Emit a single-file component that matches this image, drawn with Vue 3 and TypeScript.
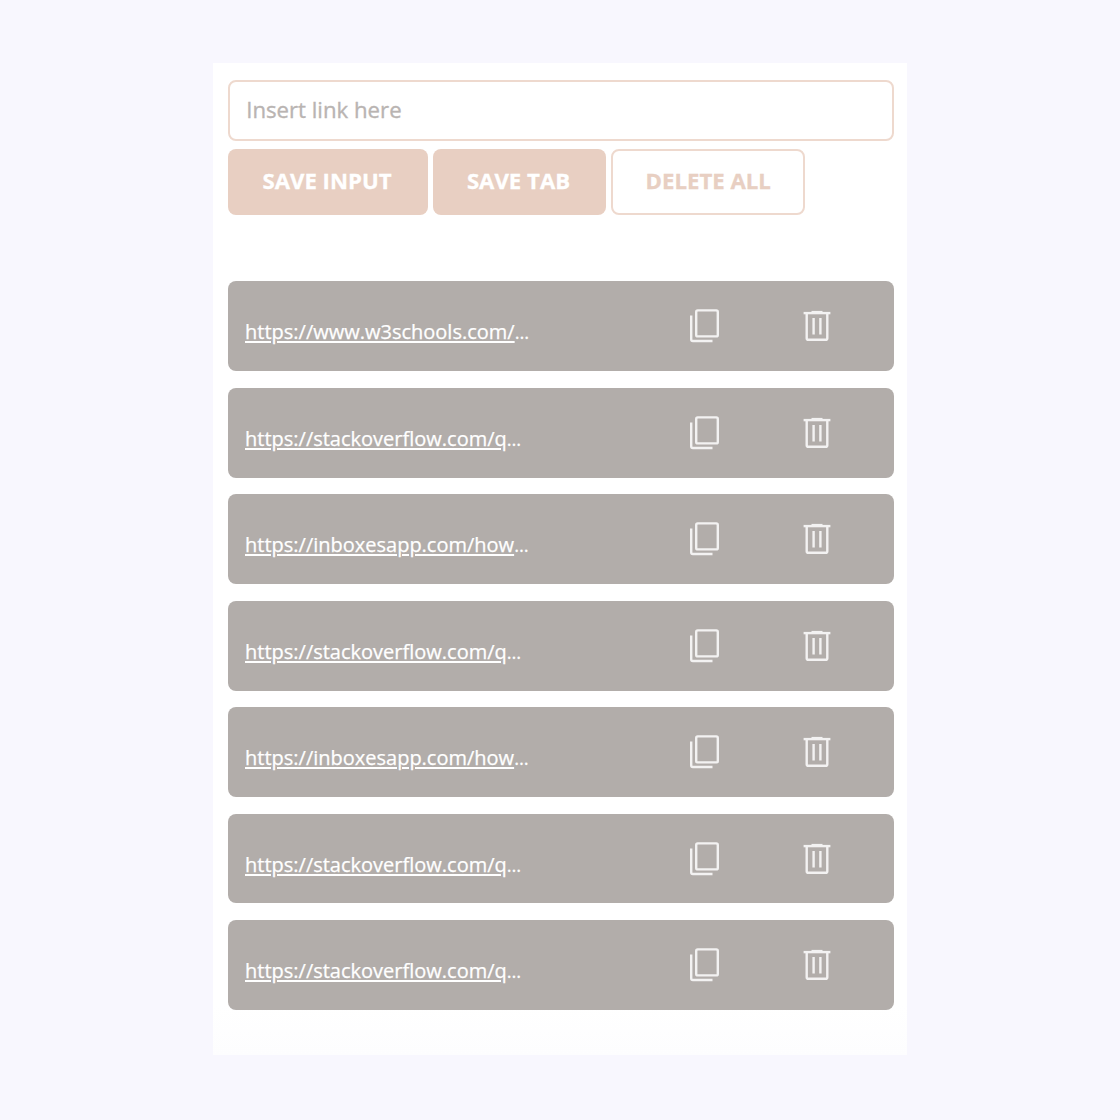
<script setup lang="ts">
import { ref } from 'vue'

const draft = ref<string>('')
const links = ref<string[]>([
  'https://www.w3schools.com/',
  'https://stackoverflow.com/q',
  'https://inboxesapp.com/how',
  'https://stackoverflow.com/q',
  'https://inboxesapp.com/how',
  'https://stackoverflow.com/q',
  'https://stackoverflow.com/q',
])
</script>

<template>
  <main class="stage">
    <section class="panel">
      <input v-model="draft" class="field" type="text" placeholder="Insert link here" />
      <div class="actions">
        <button class="btn save-input">SAVE INPUT</button>
        <button class="btn save-tab">SAVE TAB</button>
        <button class="btn outline">DELETE ALL</button>
      </div>
      <ul class="list">
        <li v-for="(link, i) in links" :key="i" class="row">
          <div class="label"><a class="link">{{ link }}</a><span class="more">…</span></div>
          <svg class="icon copy" viewBox="0 0 32 36" fill="none" stroke="currentColor" stroke-width="2.4">
            <rect x="7.2" y="2.4" width="21.6" height="26" rx="1.5" />
            <path d="M2.2 7.4V31.3Q2.2 33 3.9 33H23.5" />
          </svg>
          <svg class="icon trash" viewBox="0 0 28 36" fill="none" stroke="currentColor" stroke-width="2.4">
            <path d="M.6 5.1H27.4" />
            <path d="M8.5 4.1H19.5" />
            <path d="M3.7 5V30.2Q3.7 31.8 5.3 31.8H22.7Q24.3 31.8 24.3 30.2V5" />
            <path d="M10.6 10V26.5M17.4 10V26.5" />
          </svg>
        </li>
      </ul>
    </section>
  </main>
</template>

<style>
body {
  margin: 0;
  background: #f8f7fe;
}
</style>

<style scoped>
.stage {
  box-sizing: border-box;
  height: 1120px;
  padding: 63.4px 213px 0;
  background: #f8f7fe;
  font-family: "Open Sans", "Noto Sans", sans-serif;
}
.panel {
  box-sizing: border-box;
  width: 694px;
  height: 992px;
  padding: 16.4px 13px 0 15px;
  background: linear-gradient(#fff 95%, #fdfdfe);
}
.field {
  display: block;
  box-sizing: border-box;
  width: 666px;
  height: 61.4px;
  margin: 0;
  padding: 0 16.2px 2px;
  border: 2px solid #eed9ce;
  border-radius: 8px;
  outline: none;
  background: #fff;
  font: 22.2px "Open Sans", "Noto Sans", sans-serif;
  color: #b1acaa;
}
.field::placeholder {
  color: #b9b4b2;
  -webkit-text-stroke: 0.35px #b9b4b2;
  opacity: 1;
}
.actions {
  display: flex;
  gap: 5px;
  margin-top: 7.4px;
}
.btn {
  box-sizing: border-box;
  height: 66px;
  padding: 0 2px 1.5px 0;
  border: 0;
  border-radius: 8px;
  background: #e8cfc2;
  color: #fff;
  font: 700 22.2px "Open Sans", "Noto Sans", sans-serif;
  -webkit-text-stroke: 0.3px currentColor;
  white-space: nowrap;
}
.save-input {
  width: 200px;
}
.save-tab {
  width: 173px;
}
.outline {
  width: 194.4px;
  padding-right: 0;
  border: 2px solid #eed9ce;
  background: #fff;
  color: #e8cfc2;
}
.list {
  display: flex;
  flex-direction: column;
  gap: 16.8px;
  margin: 66.8px 0 0;
  padding: 0;
  list-style: none;
}
.row {
  display: flex;
  box-sizing: border-box;
  width: 666px;
  height: 89.7px;
  padding: 0 0 0 17px;
  border-radius: 8px;
  background: #b2adaa;
  color: #fff;
}
.label {
  width: 444px;
  padding-top: 35.8px;
  font-size: 20px;
  line-height: 30px;
  white-space: nowrap;
  -webkit-text-stroke: 0.25px #fff;
}
.link {
  text-decoration: underline;
  text-decoration-thickness: 1.5px;
  text-underline-offset: 2px;
}
.more {
  font-size: 18.5px;
}
.icon {
  flex: none;
  height: 36px;
  margin-top: 26.8px;
  color: #f3f2f2;
}
.copy {
  width: 32px;
}
.trash {
  width: 28px;
  margin-left: 82px;
}
</style>
